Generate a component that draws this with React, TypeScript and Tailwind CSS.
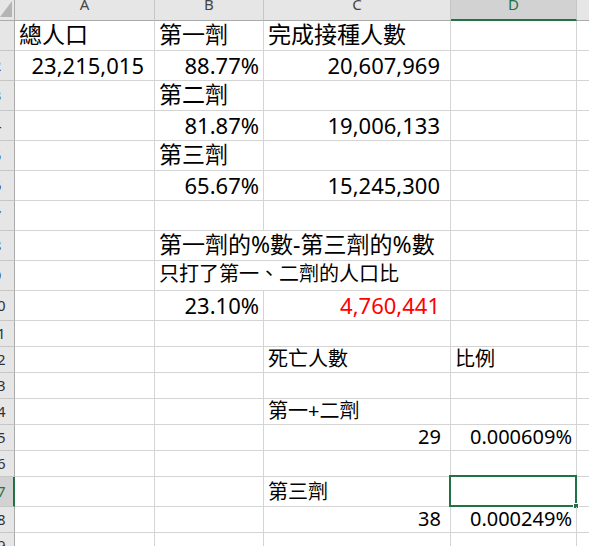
const font = "font-['Noto_Sans','Noto_Sans_CJK_TC',sans-serif]"

type Cell = { t?: string; cls?: string }
type Row = {
  n: number
  h: string
  a?: Cell
  b?: Cell
  c?: Cell
  d?: Cell
  bc?: Cell // B overflowing into C
  sel?: boolean
}

// text styles
const cjk = 'justify-start pl-1 pb-1 text-[23px]'
const num = 'justify-end pr-1 pb-1 text-[22px]'
const numPad = 'justify-end pr-[10px] pb-1 text-[22px]'
const sm = 'justify-start pl-1 pb-[3px] text-[20px]'
const smNum = 'justify-end pr-[9px] pb-[3px] text-[20px]'
const smPct = 'justify-end pr-1 pb-[3px] text-[20px]'

const rows: Row[] = [
  { n: 1, h: 'h-[30px]', a: { t: '總人口', cls: cjk }, b: { t: '第一劑', cls: cjk }, c: { t: '完成接種人數', cls: cjk } },
  { n: 2, h: 'h-[30px]', a: { t: '23,215,015', cls: numPad }, b: { t: '88.77%', cls: num }, c: { t: '20,607,969', cls: numPad } },
  { n: 3, h: 'h-[30px]', b: { t: '第二劑', cls: cjk } },
  { n: 4, h: 'h-[30px]', b: { t: '81.87%', cls: num }, c: { t: '19,006,133', cls: numPad } },
  { n: 5, h: 'h-[30px]', b: { t: '第三劑', cls: cjk } },
  { n: 6, h: 'h-[30px]', b: { t: '65.67%', cls: num }, c: { t: '15,245,300', cls: numPad } },
  { n: 7, h: 'h-[30px]' },
  { n: 8, h: 'h-[30px]', bc: { t: '第一劑的%數-第三劑的%數', cls: cjk } },
  { n: 9, h: 'h-[30px]', bc: { t: '只打了第一、二劑的人口比', cls: 'justify-start pl-1 pb-[6px] text-[20px]' } },
  { n: 10, h: 'h-[30px]', b: { t: '23.10%', cls: num }, c: { t: '4,760,441', cls: numPad + ' text-[#ff0000]' } },
  { n: 11, h: 'h-[26px]' },
  { n: 12, h: 'h-[26px]', c: { t: '死亡人數', cls: sm }, d: { t: '比例', cls: sm } },
  { n: 13, h: 'h-[26px]' },
  { n: 14, h: 'h-[26px]', c: { t: '第一+二劑', cls: sm } },
  { n: 15, h: 'h-[26px]', c: { t: '29', cls: smNum }, d: { t: '0.000609%', cls: smPct } },
  { n: 16, h: 'h-[26px]' },
  { n: 17, h: 'h-[30px]', c: { t: '第三劑', cls: 'justify-start pl-1 pb-1 text-[20px]' }, sel: true },
  { n: 18, h: 'h-[26px]', c: { t: '38', cls: smNum }, d: { t: '0.000249%', cls: smPct } },
  { n: 19, h: 'h-[26px]' },
]

function GridCell({ w, cell, children }: { w: string; cell?: Cell; children?: React.ReactNode }) {
  return (
    <div className={`relative flex shrink-0 items-end border-r border-b border-[#d4d4d4] ${w} ${cell?.cls ?? ''}`}>
      {cell?.t && <span className="whitespace-nowrap leading-none">{cell.t}</span>}
      {children}
    </div>
  )
}

function ColHead({ w, label, active }: { w: string; label: string; active?: boolean }) {
  return (
    <div
      className={`flex shrink-0 justify-center border-r border-[#c6c6c6] ${w} ${
        active ? 'border-b-2 border-b-[#217346] bg-[#d2d2d2] text-[#217346]' : 'border-b border-b-[#ababab]'
      }`}
    >
      <span className="-mt-[3px] text-[15px] leading-none">{label}</span>
    </div>
  )
}

export default function App() {
  return (
    <div className={`h-[546px] w-[589px] overflow-hidden bg-white text-black ${font}`}>
      {/* column headers */}
      <div className="flex h-[21px] bg-[#e6e6e6] text-[#444]">
        <div className="flex w-[15px] shrink-0 items-start justify-end border-r border-b border-[#ababab] pt-[1px] pr-[2px]">
          <svg width="12" height="16" viewBox="0 0 12 16">
            <polygon points="12,0 12,16 0,16" fill="#b4b4b4" />
          </svg>
        </div>
        <ColHead w="w-[140px]" label="A" />
        <ColHead w="w-[109px]" label="B" />
        <ColHead w="w-[187px]" label="C" />
        <ColHead w="w-[126px]" label="D" active />
        <div className="flex-1 border-b border-[#ababab]" />
      </div>

      {rows.map((r) => (
        <div key={r.n} className={`flex ${r.h}`}>
          {/* row header, mostly scrolled out of view */}
          <div
            className={`flex w-[15px] shrink-0 items-center overflow-hidden border-b border-[#c6c6c6] ${
              r.sel ? 'border-r-2 border-r-[#217346] bg-[#d2d2d2] text-[#217346]' : 'border-r border-r-[#ababab] bg-[#e6e6e6] text-[#333]'
            }`}
          >
            <div className="-ml-[20px] w-[34px] shrink-0 text-center text-[15px] leading-none">{r.n}</div>
          </div>
          <GridCell w="w-[140px]" cell={r.a} />
          {r.bc ? (
            <GridCell w="w-[296px]" cell={r.bc} />
          ) : (
            <>
              <GridCell w="w-[109px]" cell={r.b} />
              <GridCell w="w-[187px]" cell={r.c} />
            </>
          )}
          <GridCell w="w-[126px]" cell={r.d}>
            {r.sel && (
              <div className="absolute -top-[2px] -left-[2px] h-[32px] w-[128px] border-2 border-[#217346]">
                <div className="absolute -right-[4px] -bottom-[4px] h-[6px] w-[6px] border border-white bg-[#217346]" />
              </div>
            )}
          </GridCell>
          <div className="flex-1 border-b border-[#d4d4d4]" />
        </div>
      ))}
    </div>
  )
}
